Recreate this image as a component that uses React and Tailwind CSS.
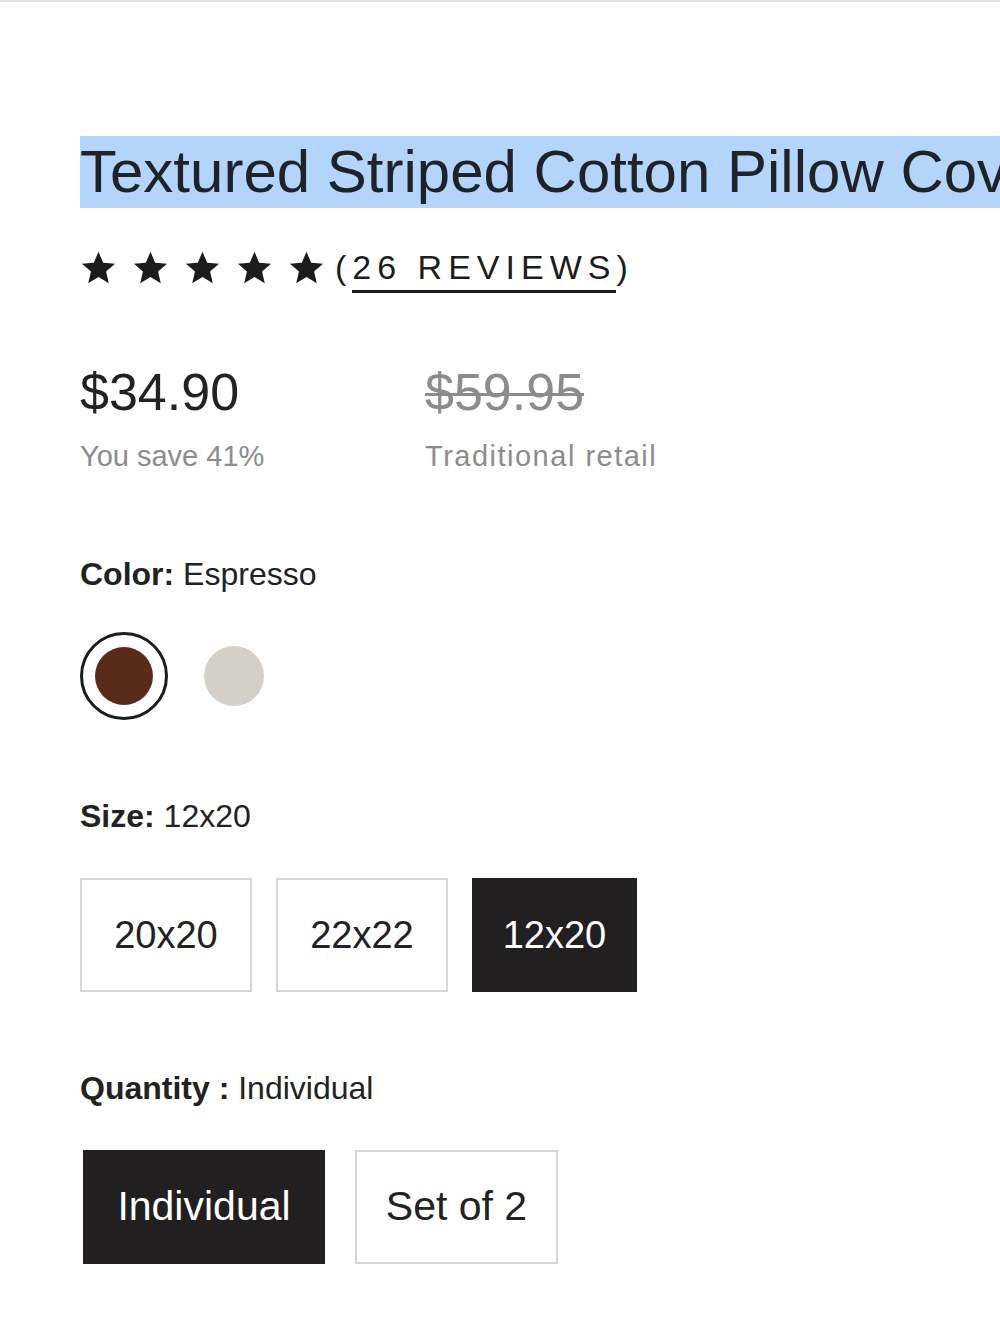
import React from "react";

const font = { fontFamily: '"Liberation Sans", Arial, sans-serif' };

function Star() {
  return (
    <svg viewBox="0 0 24 24" className="w-[37px] h-[37px] shrink-0" fill="#1c1c1c">
      <path d="M12 1.8l3.05 7.1 7.7.65-5.85 5.05 1.78 7.55L12 18.1l-6.68 4.05 1.78-7.55L1.25 9.55l7.7-.65z" />
    </svg>
  );
}

function SizeButton({ label, active, width }) {
  return (
    <div
      className={
        "h-[114px] flex items-center justify-center text-[38px] " +
        width +
        (active ? " bg-[#211f1f] text-white" : " border-2 border-[#d6d6d6] text-[#222]")
      }
    >
      {label}
    </div>
  );
}

export default function App() {
  return (
    <div className="w-[1000px] h-[1333px] bg-white overflow-hidden border-t-2 border-[#e3e3e3]" style={font}>
      <div className="pl-[80px] pt-[134px]">
        {/* title, selected */}
        <div className="whitespace-nowrap">
          <span className="bg-[#b3d5fc] text-[60px] leading-[72px] text-[#1f2226] pr-[40px] inline-block">
            Textured Striped Cotton Pillow Cover
          </span>
        </div>

        {/* rating */}
        <div className="flex items-center mt-[34px] h-[50px]">
          <div className="flex gap-[15px]">
            <Star />
            <Star />
            <Star />
            <Star />
            <Star />
          </div>
          <span className="ml-[10px] text-[34px] font-medium tracking-[6px] text-[#1c1c1c]">
            (<span className="border-b-[3px] border-[#1c1c1c] pb-[4px]">26 REVIEWS</span>)
          </span>
        </div>

        {/* prices */}
        <div className="flex mt-[70px]">
          <div className="w-[345px]">
            <div className="text-[52px] leading-[60px] text-[#222]">$34.90</div>
            <div className="text-[29px] leading-[36px] mt-[16px] text-[#8c8c8c]">You save 41%</div>
          </div>
          <div>
            <div className="text-[52px] leading-[60px] text-[#8c8c8c] line-through decoration-[3px]">$59.95</div>
            <div className="text-[29px] leading-[36px] mt-[16px] text-[#8c8c8c] tracking-[1.5px]">Traditional retail</div>
          </div>
        </div>

        {/* color */}
        <div className="mt-[80px] text-[32px] leading-[40px] text-[#222]">
          <span className="font-semibold">Color:</span> Espresso
        </div>
        <div className="flex items-center gap-[36px] mt-[38px]">
          <div className="w-[88px] h-[88px] rounded-full border-[3px] border-[#1c1c1c] flex items-center justify-center">
            <div className="w-[58px] h-[58px] rounded-full bg-[#5a2a1b]" />
          </div>
          <div className="w-[60px] h-[60px] rounded-full bg-[#d5cfc7]" />
        </div>

        {/* size */}
        <div className="mt-[76px] text-[32px] leading-[40px] text-[#222]">
          <span className="font-semibold">Size:</span> 12x20
        </div>
        <div className="flex gap-[24px] mt-[42px]">
          <SizeButton label="20x20" width="w-[172px]" />
          <SizeButton label="22x22" width="w-[172px]" />
          <SizeButton label="12x20" width="w-[165px]" active />
        </div>

        {/* quantity */}
        <div className="mt-[76px] text-[32px] leading-[40px] text-[#222]">
          <span className="font-semibold">Quantity :</span> Individual
        </div>
        <div className="flex gap-[30px] mt-[42px] pl-[3px]">
          <div className="w-[242px] h-[114px] bg-[#211f1f] text-white text-[41px] flex items-center justify-center">
            Individual
          </div>
          <div className="w-[203px] h-[114px] border-2 border-[#d6d6d6] text-[#222] text-[41px] flex items-center justify-center">
            Set of 2
          </div>
        </div>
      </div>
    </div>
  );
}
